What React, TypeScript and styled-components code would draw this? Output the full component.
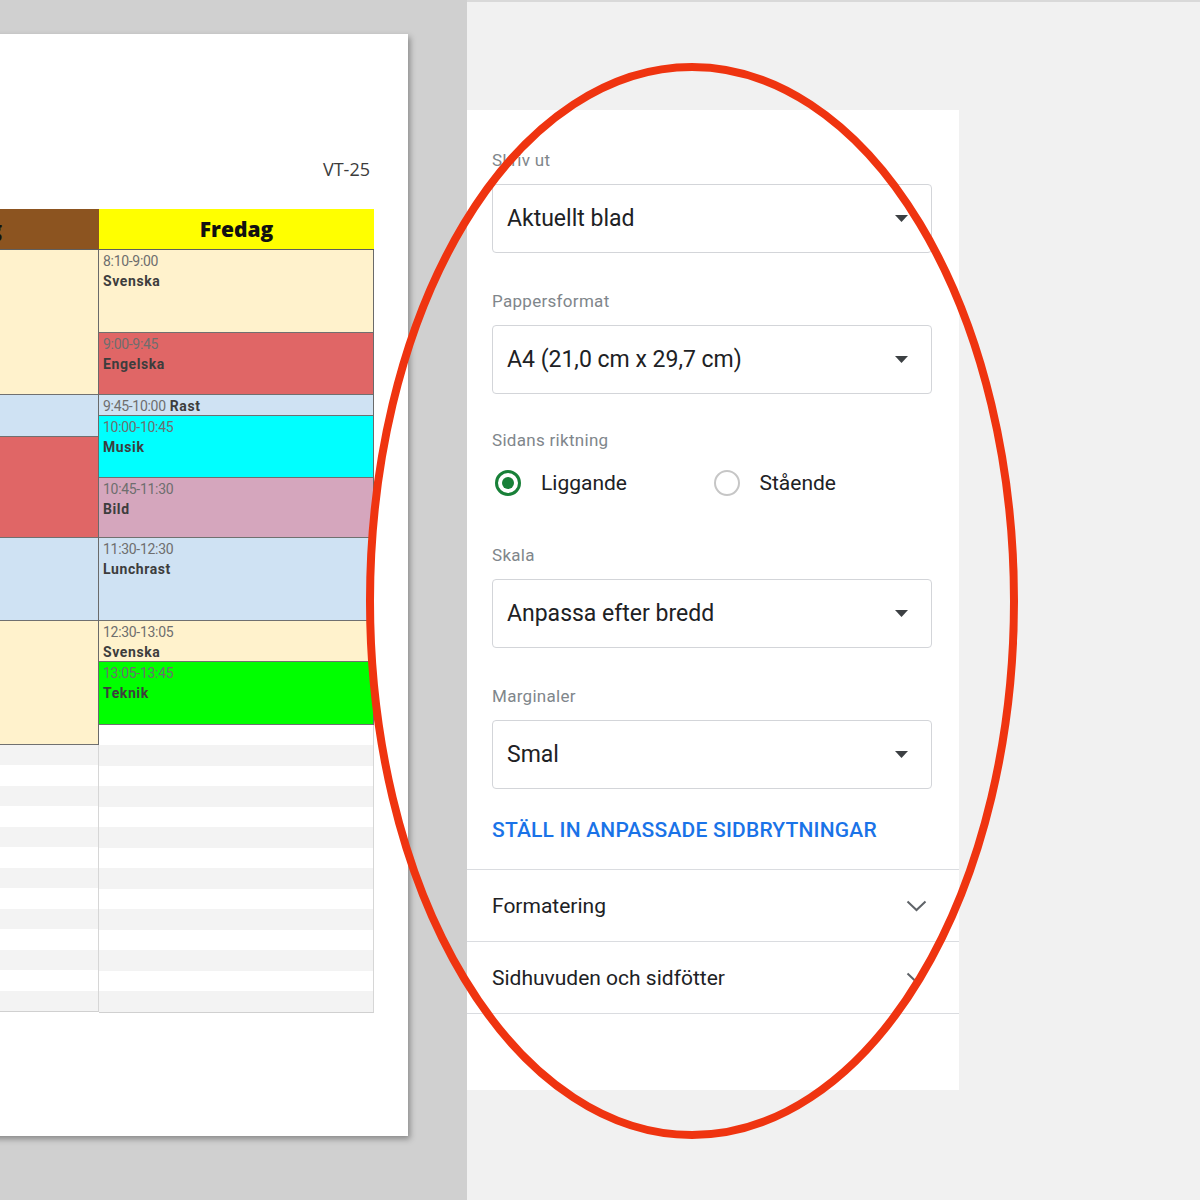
import React from "react";
import styled, { createGlobalStyle } from "styled-components";

const GlobalStyle = createGlobalStyle`
  html, body { margin: 0; padding: 0; background: #f1f1f1; }
  body { font-family: Roboto, "Liberation Sans", Arial, sans-serif; }
  *, *::before, *::after { box-sizing: border-box; }
`;

/* ---------- layout shell ---------- */

const Screen = styled.div`
  position: relative;
  display: flex;
  width: 1200px;
  height: 1200px;
  overflow: hidden;
`;

const PreviewPane = styled.div`
  width: 467px;
  flex-shrink: 0;
  background: #d0d0d0;
  display: flex;
  justify-content: flex-end;
  align-items: flex-start;
  padding: 34px 59px 0 0;
  overflow: hidden;
`;

const Sheet = styled.div`
  flex-shrink: 0;
  height: 1102px;
  background: #fff;
  box-shadow: 2px 3px 6px rgba(0, 0, 0, 0.35);
  padding: 124px 34px 0 40px;
  display: flex;
  flex-direction: column;
  align-items: flex-end;
`;

const SheetTag = styled.div`
  font-family: "Open Sans", "Liberation Sans", sans-serif;
  font-size: 18px;
  line-height: 22px;
  color: #3c3c3c;
  margin-right: 4px;
`;

/* ---------- timetable ---------- */

const Schedule = styled.div`
  margin-top: 29px;
  display: flex;
`;

const DayColumn = styled.div<{ $width: number }>`
  width: ${(p) => p.$width}px;
  display: flex;
  flex-direction: column;
`;

const DayHeader = styled.div<{ $bg: string }>`
  height: 41px;
  background: ${(p) => p.$bg};
  border-bottom: 1px solid #5f5f5f;
  display: flex;
  align-items: center;
  justify-content: center;
  font-family: "Open Sans", "Liberation Sans", sans-serif;
  font-weight: 800;
  font-size: 21px;
  color: #111;
  white-space: nowrap;
`;

const SlotStack = styled.div`
  display: flex;
  flex-direction: column;
  border-right: 1px solid #6a6a6a;
`;

const Slot = styled.div<{ $h: number; $bg: string }>`
  height: ${(p) => p.$h}px;
  background: ${(p) => p.$bg};
  border-bottom: 1px solid #707070;
  padding: 1px 4px 0;
  font-family: Roboto, "Liberation Sans", sans-serif;
  font-size: 14px;
  line-height: 20px;
  overflow: hidden;
  white-space: nowrap;
`;

const SlotTime = styled.span`
  color: #6e6e6e;
  letter-spacing: -0.3px;
`;

const SlotName = styled.span<{ $inline?: boolean }>`
  display: ${(p) => (p.$inline ? "inline" : "block")};
  font-weight: 700;
  letter-spacing: 0.6px;
  color: #3d3d3d;
  margin-left: ${(p) => (p.$inline ? "4px" : "0")};
`;

const StripeStack = styled.div<{ $h: number }>`
  height: ${(p) => p.$h}px;
  display: flex;
  flex-direction: column;
  border-right: 1px solid #d6d6d6;
  border-bottom: 1px solid #d0d0d0;
`;

const StripeRow = styled.div<{ $shade: boolean }>`
  flex: 1;
  background: ${(p) => (p.$shade ? "#f3f3f3" : "#ffffff")};
`;

/* ---------- print settings panel ---------- */

const SettingsPane = styled.div`
  flex: 1;
  background: #f1f1f1;
  border-top: 2px solid #d9d9d9;
  padding-top: 108px;
`;

const Panel = styled.section`
  width: 492px;
  height: 980px;
  background: #fff;
  display: flex;
  flex-direction: column;
`;

const Form = styled.div`
  padding: 40px 27px 27px 25px;
  display: flex;
  flex-direction: column;
  border-bottom: 1px solid #dadce0;
`;

const Field = styled.div<{ $top: number }>`
  margin-top: ${(p) => p.$top}px;
  display: flex;
  flex-direction: column;
`;

const FieldLabel = styled.div`
  font-size: 17px;
  line-height: 20px;
  letter-spacing: 0.3px;
  color: #80868b;
`;

const SelectBox = styled.div`
  margin-top: 14px;
  height: 69px;
  border: 1px solid #d3d5d9;
  border-radius: 4px;
  display: flex;
  align-items: center;
  justify-content: space-between;
  padding: 0 23px 0 14px;
  font-size: 23px;
  color: #202124;
`;

const RadioRow = styled.div`
  margin-top: 20px;
  padding-left: 3px;
  display: flex;
  align-items: center;
`;

const RadioOption = styled.label`
  width: 220px;
  display: flex;
  align-items: center;
  gap: 20px;
  font-size: 21px;
  color: #202124;
`;

const RadioMark = styled.span<{ $on: boolean }>`
  width: 26px;
  height: 26px;
  border-radius: 50%;
  border: ${(p) => (p.$on ? "3px solid #188038" : "2px solid #c6c6c6")};
  display: flex;
  align-items: center;
  justify-content: center;
  &::after {
    content: "";
    width: 12px;
    height: 12px;
    border-radius: 50%;
    background: ${(p) => (p.$on ? "#188038" : "transparent")};
  }
`;

const LinkButton = styled.div`
  margin-top: 29px;
  font-size: 21px;
  line-height: 24px;
  font-weight: 500;
  letter-spacing: 0.2px;
  color: #1a73e8;
  text-transform: uppercase;
  white-space: nowrap;
`;

const AccordionRow = styled.div`
  height: 72px;
  border-bottom: 1px solid #dadce0;
  display: flex;
  align-items: center;
  justify-content: space-between;
  padding: 0 32px 0 25px;
  font-size: 21px;
  color: #202124;
`;

const Overlay = styled.svg`
  position: absolute;
  left: 0;
  top: 0;
  pointer-events: none;
`;

/* ---------- data ---------- */

const CREAM = "#fff2cc";
const RED = "#e06666";
const BLUE = "#cfe2f3";
const CYAN = "#00ffff";
const PINK = "#d5a6bd";
const GREEN = "#00ff00";

type Lesson = { h: number; bg: string; time?: string; name?: string; inline?: boolean };

// Thursday blocks sit mostly outside the visible part of the sheet, only their colours show
const thursday: Lesson[] = [
  { h: 145, bg: CREAM },
  { h: 42, bg: BLUE },
  { h: 101, bg: RED },
  { h: 83, bg: BLUE },
  { h: 124, bg: CREAM },
];

const friday: Lesson[] = [
  { h: 83, bg: CREAM, time: "8:10-9:00", name: "Svenska" },
  { h: 62, bg: RED, time: "9:00-9:45", name: "Engelska" },
  { h: 21, bg: BLUE, time: "9:45-10:00", name: "Rast", inline: true },
  { h: 62, bg: CYAN, time: "10:00-10:45", name: "Musik" },
  { h: 60, bg: PINK, time: "10:45-11:30", name: "Bild" },
  { h: 83, bg: BLUE, time: "11:30-12:30", name: "Lunchrast" },
  { h: 41, bg: CREAM, time: "12:30-13:05", name: "Svenska" },
  { h: 63, bg: GREEN, time: "13:05-13:45", name: "Teknik" },
];

const Caret = () => (
  <svg width="13" height="7" viewBox="0 0 13 7">
    <path d="M0 0 H13 L6.5 7 Z" fill="#3c4043" />
  </svg>
);

const Chevron = () => (
  <svg width="21" height="12" viewBox="0 0 21 12">
    <polyline points="1.5,1.5 10.5,10 19.5,1.5" fill="none" stroke="#5f6368" strokeWidth="2" />
  </svg>
);

const Day = ({
  title,
  headerBg,
  width,
  lessons,
  stripes,
  startShade,
}: {
  title: string;
  headerBg: string;
  width: number;
  lessons: Lesson[];
  stripes: number;
  startShade: boolean;
}) => (
  <DayColumn $width={width}>
    <DayHeader $bg={headerBg}>{title}</DayHeader>
    <SlotStack>
      {lessons.map((l, i) => (
        <Slot key={i} $h={l.h} $bg={l.bg}>
          {l.time && <SlotTime>{l.time}</SlotTime>}
          {l.name && <SlotName $inline={l.inline}>{l.name}</SlotName>}
        </Slot>
      ))}
    </SlotStack>
    <StripeStack $h={stripes * 20.54}>
      {Array.from({ length: stripes }, (_, i) => (
        <StripeRow key={i} $shade={startShade ? i % 2 === 0 : i % 2 === 1} />
      ))}
    </StripeStack>
  </DayColumn>
);

export default function App() {
  return (
    <>
      <GlobalStyle />
      <Screen>
        <PreviewPane>
          <Sheet>
            <SheetTag>VT-25</SheetTag>
            <Schedule>
              <Day title="Torsdag" headerBg="#8c5420" width={280} lessons={thursday} stripes={13} startShade />
              <Day title="Fredag" headerBg="#ffff00" width={275} lessons={friday} stripes={14} startShade={false} />
            </Schedule>
          </Sheet>
        </PreviewPane>

        <SettingsPane>
          <Panel>
            <Form>
              <Field $top={0}>
                <FieldLabel>Skriv ut</FieldLabel>
                <SelectBox>
                  Aktuellt blad
                  <Caret />
                </SelectBox>
              </Field>
              <Field $top={38}>
                <FieldLabel>Pappersformat</FieldLabel>
                <SelectBox>
                  A4 (21,0 cm x 29,7 cm)
                  <Caret />
                </SelectBox>
              </Field>
              <Field $top={36}>
                <FieldLabel>Sidans riktning</FieldLabel>
                <RadioRow>
                  <RadioOption>
                    <RadioMark $on />
                    Liggande
                  </RadioOption>
                  <RadioOption>
                    <RadioMark $on={false} />
                    Stående
                  </RadioOption>
                </RadioRow>
              </Field>
              <Field $top={49}>
                <FieldLabel>Skala</FieldLabel>
                <SelectBox>
                  Anpassa efter bredd
                  <Caret />
                </SelectBox>
              </Field>
              <Field $top={38}>
                <FieldLabel>Marginaler</FieldLabel>
                <SelectBox>
                  Smal
                  <Caret />
                </SelectBox>
              </Field>
              <LinkButton>Ställ in anpassade sidbrytningar</LinkButton>
            </Form>
            <AccordionRow>
              Formatering
              <Chevron />
            </AccordionRow>
            <AccordionRow>
              Sidhuvuden och sidfötter
              <Chevron />
            </AccordionRow>
          </Panel>
        </SettingsPane>

        <Overlay width="1200" height="1200" viewBox="0 0 1200 1200">
          <ellipse cx="692" cy="601" rx="322" ry="534" fill="none" stroke="#ef3410" strokeWidth="8" />
        </Overlay>
      </Screen>
    </>
  );
}
